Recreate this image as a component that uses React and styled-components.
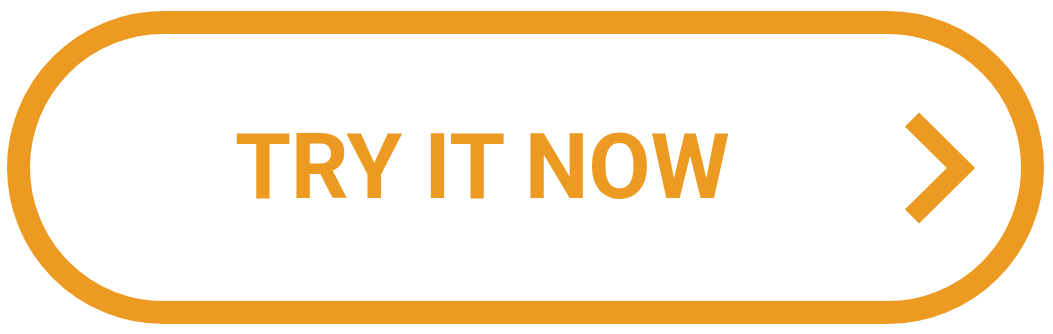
import React from "react";
import styled, { createGlobalStyle } from "styled-components";

const Global = createGlobalStyle`
  html, body { margin: 0; padding: 0; background: #ffffff; }
  body { width: 1053px; height: 334px; overflow: hidden; }
`;

const Page = styled.div`
  width: 1053px;
  height: 334px;
  padding: 11px 9px 10px 7px;
  box-sizing: border-box;
`;

const Pill = styled.button`
  width: 100%;
  height: 100%;
  box-sizing: border-box;
  border: 23px solid ${(p) => p.$color};
  border-radius: 9999px;
  background: #ffffff;
  display: flex;
  align-items: center;
  padding: 0 44px 0 205px;
  margin: 0;
  cursor: pointer;
`;

const Label = styled.span`
  font-family: Roboto, "Liberation Sans", sans-serif;
  font-weight: 700;
  font-size: 90.5px;
  line-height: 1;
  color: ${(p) => p.$color};
  letter-spacing: -0.3px;
  white-space: nowrap;
`;

const Chevron = styled.svg`
  margin-left: auto;
  display: block;
  flex: none;
`;

export default function App() {
  const color = "#EC9A22";
  return (
    <>
      <Global />
      <Page>
        <Pill $color={color}>
          <Label $color={color}>TRY IT NOW</Label>
          <Chevron width="72" height="112" viewBox="0 0 72 112">
            <polyline
              points="7,7.5 56,56 7,104.5"
              fill="none"
              stroke={color}
              strokeWidth="20"
              strokeLinejoin="miter"
              strokeMiterlimit="4"
            />
          </Chevron>
        </Pill>
      </Page>
    </>
  );
}
